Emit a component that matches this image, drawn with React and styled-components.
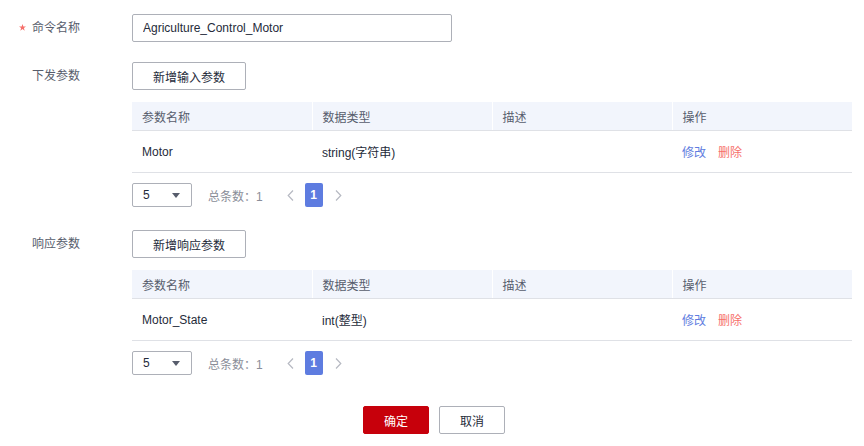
import React from 'react';
import styled, { createGlobalStyle } from 'styled-components';

const GlobalStyle = createGlobalStyle`
  body {
    margin: 0;
    background: #fff;
    font-family: "Liberation Sans", "Noto Sans CJK SC", sans-serif;
    font-size: 12px;
    color: #252b3a;
  }
`;

const Form = styled.div`
  padding: 14px 12px 0 0;
  width: 852px;
`;

const FormItem = styled.div`
  display: grid;
  grid-template-columns: 80px 720px;
  column-gap: 52px;
  margin-bottom: ${p => p.gap || 0}px;
`;

const Label = styled.div`
  position: relative;
  height: 28px;
  line-height: 28px;
  text-align: right;
  color: #575d6c;
`;

const Required = styled.span`
  position: absolute;
  left: 19px;
  top: 10px;
  display: flex;
`;

const TextInput = styled.input`
  box-sizing: border-box;
  width: 320px;
  height: 28px;
  padding: 0 10px;
  border: 1px solid #adb0b8;
  border-radius: 2px;
  font: inherit;
  color: #252b3a;
  outline: none;
`;

const Button = styled.button`
  box-sizing: border-box;
  width: ${p => p.width || 114}px;
  height: 28px;
  padding: 0;
  border: 1px solid ${p => (p.primary ? '#c7000b' : '#adb0b8')};
  border-radius: 2px;
  background: ${p => (p.primary ? '#c7000b' : '#fff')};
  color: ${p => (p.primary ? '#fff' : '#252b3a')};
  font: inherit;
  cursor: pointer;
`;

const Table = styled.table`
  width: 720px;
  margin-top: 12px;
  border-collapse: collapse;
  table-layout: fixed;
`;

const Th = styled.th`
  height: 28px;
  padding: 0 10px;
  text-align: left;
  font-weight: normal;
  color: #575d6c;
  background: #f2f5fc;
  border-bottom: 1px solid #dfe1e6;
  border-left: ${p => (p.first ? 'none' : '1px solid #fff')};
`;

const Td = styled.td`
  height: 41px;
  padding: 0 10px;
  border-bottom: 1px solid #dfe1e6;
`;

const Action = styled.a`
  margin-right: 12px;
  color: ${p => (p.danger ? '#f66f6a' : '#5e7ce0')};
  cursor: pointer;
`;

const Pager = styled.div`
  display: flex;
  align-items: center;
  height: 24px;
  margin-top: 10px;
`;

const SizeSelect = styled.div`
  box-sizing: border-box;
  display: flex;
  align-items: center;
  justify-content: space-between;
  width: 60px;
  height: 24px;
  padding: 0 11px 0 10px;
  border: 1px solid #adb0b8;
  border-radius: 2px;
`;

const Total = styled.span`
  margin-left: 16px;
  color: #8a8e99;
`;

const PageNav = styled.span`
  display: flex;
  align-items: center;
  margin-left: ${p => p.offset || 0}px;
`;

const PageNum = styled.span`
  display: flex;
  align-items: center;
  justify-content: center;
  width: 18px;
  height: 24px;
  margin-left: 11px;
  border-radius: 2px;
  background: #5e7ce0;
  color: #fff;
  font-weight: bold;
`;

const Footer = styled.div`
  display: flex;
  justify-content: center;
  gap: 10px;
  margin: 31px 0 0 16px;
`;

const Star = () => (
  <svg width="7" height="7" viewBox="0 0 10 10">
    <path
      d="M5 0l1.2 3.5H10L7 5.8 8.1 9.5 5 7.3 1.9 9.5 3 5.8 0 3.5h3.8z"
      fill="#f66f6a"
    />
  </svg>
);

const Caret = () => (
  <svg width="8" height="5" viewBox="0 0 8 5">
    <path d="M0 0h8L4 5z" fill="#575d6c" />
  </svg>
);

const Chevron = ({ dir }) => (
  <svg width="7" height="11" viewBox="0 0 7 11">
    <path
      d={dir === 'left' ? 'M6 0.5L1.2 5.5 6 10.5' : 'M1 0.5l4.8 5-4.8 5'}
      fill="none"
      stroke="#b6b9c2"
      strokeWidth="1.2"
    />
  </svg>
);

const columns = ['参数名称', '数据类型', '描述', '操作'];

const ParamSection = ({ label, addText, row, gap }) => (
  <FormItem gap={gap}>
    <Label>{label}</Label>
    <div>
      <Button>{addText}</Button>
      <Table>
        <thead>
          <tr>
            {columns.map((c, i) => (
              <Th key={c} first={i === 0}>
                {c}
              </Th>
            ))}
          </tr>
        </thead>
        <tbody>
          <tr>
            <Td>{row.name}</Td>
            <Td>{row.type}</Td>
            <Td />
            <Td>
              <Action>修改</Action>
              <Action danger>删除</Action>
            </Td>
          </tr>
        </tbody>
      </Table>
      <Pager>
        <SizeSelect>
          <span>5</span>
          <Caret />
        </SizeSelect>
        <Total>总条数：1</Total>
        <PageNav offset={24}>
          <Chevron dir="left" />
        </PageNav>
        <PageNum>1</PageNum>
        <PageNav offset={12}>
          <Chevron dir="right" />
        </PageNav>
      </Pager>
    </div>
  </FormItem>
);

const App = () => (
  <>
    <GlobalStyle />
    <Form>
      <FormItem gap={20}>
        <Label>
          <Required>
            <Star />
          </Required>
          命令名称
        </Label>
        <div>
          <TextInput defaultValue="Agriculture_Control_Motor" />
        </div>
      </FormItem>
      <ParamSection
        label="下发参数"
        addText="新增输入参数"
        row={{ name: 'Motor', type: 'string(字符串)' }}
        gap={23}
      />
      <ParamSection
        label="响应参数"
        addText="新增响应参数"
        row={{ name: 'Motor_State', type: 'int(整型)' }}
      />
      <Footer>
        <Button primary width={66}>确定</Button>
        <Button width={66}>取消</Button>
      </Footer>
    </Form>
  </>
);

export default App;
